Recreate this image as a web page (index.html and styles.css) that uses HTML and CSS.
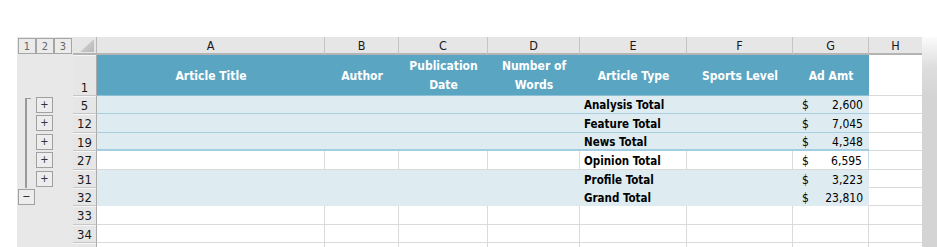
FILE: index.html
```html
<!DOCTYPE html>
<html>
<head>
<meta charset="utf-8">
<link rel="stylesheet" href="styles.css">
</head>
<body>
<div class="page">
  <div class="sheet">
    <div class="row colhdr">
      <div class="levels"><span class="lvl">1</span><span class="lvl">2</span><span class="lvl">3</span></div>
      <div class="corner"><svg class="tri" width="14" height="13" viewBox="0 0 14 13"><defs><linearGradient id="g" x1="0" y1="0" x2="1" y2="1"><stop offset="0" stop-color="#d8d8d8"/><stop offset="1" stop-color="#b8b8b8"/></linearGradient></defs><polygon points="14,0 14,13 0,13" fill="url(#g)"/></svg></div>
      <div class="ch">A</div>
      <div class="ch">B</div>
      <div class="ch">C</div>
      <div class="ch">D</div>
      <div class="ch">E</div>
      <div class="ch">F</div>
      <div class="ch">G</div>
      <div class="ch last">H</div>
    </div>

    <div class="row hdr">
      <div class="ol"></div>
      <div class="rh rh-bottom">1</div>
      <div class="th">Article Title</div>
      <div class="th">Author</div>
      <div class="th">Publication<br>Date</div>
      <div class="th">Number of<br>Words</div>
      <div class="th">Article Type</div>
      <div class="th">Sports Level</div>
      <div class="th">Ad Amt</div>
      <div class="hc"></div>
    </div>

    <div class="row r18">
      <div class="ol br-start"><span class="obtn">+</span></div>
      <div class="rh">5</div>
      <div class="b bl"></div><div class="b bl"></div><div class="b bl"></div><div class="b bl"></div>
      <div class="b bl t">Analysis Total</div><div class="b bl"></div>
      <div class="b bl amt"><span>$</span><span>2,600</span></div>
      <div class="hc"></div>
    </div>

    <div class="row r19">
      <div class="ol br"><span class="obtn">+</span></div>
      <div class="rh">12</div>
      <div class="b bl"></div><div class="b bl"></div><div class="b bl"></div><div class="b bl"></div>
      <div class="b bl t">Feature Total</div><div class="b bl"></div>
      <div class="b bl amt"><span>$</span><span>7,045</span></div>
      <div class="hc"></div>
    </div>

    <div class="row r18">
      <div class="ol br"><span class="obtn">+</span></div>
      <div class="rh">19</div>
      <div class="b bl2"></div><div class="b bl2"></div><div class="b bl2"></div><div class="b bl2"></div>
      <div class="b bl2 t">News Total</div><div class="b bl2"></div>
      <div class="b bl2 amt"><span>$</span><span>4,348</span></div>
      <div class="hc"></div>
    </div>

    <div class="row r19">
      <div class="ol br"><span class="obtn">+</span></div>
      <div class="rh">27</div>
      <div class="w"></div><div class="w"></div><div class="w"></div><div class="w"></div>
      <div class="w t">Opinion Total</div><div class="w"></div>
      <div class="w wg amt"><span>$</span><span>6,595</span></div>
      <div class="hc"></div>
    </div>

    <div class="row r18">
      <div class="ol br"><span class="obtn">+</span></div>
      <div class="rh">31</div>
      <div class="b"></div><div class="b"></div><div class="b"></div><div class="b"></div>
      <div class="b t">Profile Total</div><div class="b"></div>
      <div class="b amt"><span>$</span><span>3,223</span></div>
      <div class="hc"></div>
    </div>

    <div class="row r18">
      <div class="ol ol-min"><span class="obtn minus">&minus;</span></div>
      <div class="rh">32</div>
      <div class="b"></div><div class="b"></div><div class="b"></div><div class="b"></div>
      <div class="b t">Grand Total</div><div class="b"></div>
      <div class="b amt"><span>$</span><span>23,810</span></div>
      <div class="hc"></div>
    </div>

    <div class="row r19">
      <div class="ol"></div>
      <div class="rh">33</div>
      <div class="w"></div><div class="w"></div><div class="w"></div><div class="w"></div>
      <div class="w"></div><div class="w"></div><div class="w"></div>
      <div class="hc"></div>
    </div>

    <div class="row r18">
      <div class="ol"></div>
      <div class="rh">34</div>
      <div class="w"></div><div class="w"></div><div class="w"></div><div class="w"></div>
      <div class="w"></div><div class="w"></div><div class="w"></div>
      <div class="hc"></div>
    </div>

    <div class="row r18">
      <div class="ol"></div>
      <div class="rh"></div>
      <div class="w"></div><div class="w"></div><div class="w"></div><div class="w"></div>
      <div class="w"></div><div class="w"></div><div class="w"></div>
      <div class="hc"></div>
    </div>
  </div>
  <div class="shade"></div>
</div>
</body>
</html>
```

FILE: styles.css
```css
* {
  box-sizing: border-box;
  margin: 0;
  padding: 0;
}

html, body {
  height: 247px;
  overflow: hidden;
}

body {
  background: #fff;
  font-family: "DejaVu Sans Condensed", "DejaVu Sans", sans-serif;
  font-stretch: semi-condensed;
  font-size: 12px;
  color: #111;
}

.page {
  display: flex;
  padding: 37px 0 0 17px;
  height: 247px;
}

.sheet {
  width: 905px;
  flex: none;
}

.shade {
  flex: 1;
  background: linear-gradient(to bottom, #fbfbfb 0, #dedede 30px, #d4d4d4 60px);
}

.row {
  display: grid;
  grid-template-columns: 56px 24px 228px 74px 89px 92px 107px 106px 76px 53px;
}

.r18 { height: 18px; }
.r19 { height: 19px; }

/* column header band */
.colhdr {
  height: 18px;
}

.levels {
  background: #e8e8e8;
  display: flex;
  padding: 1px 0 0 1px;
}

.lvl {
  width: 18px;
  height: 16px;
  border: 1px solid #a5a5a5;
  background: #ebebeb;
  color: #666;
  font-size: 11px;
  display: flex;
  align-items: center;
  justify-content: center;
}

.corner {
  background: #e6e6e6;
  border-bottom: 2px solid #b4b4b4;
  border-right: 1px solid #b9b9b9;
  display: flex;
  justify-content: flex-end;
  align-items: flex-end;
  padding: 0 2px 1px 0;
}

.tri { display: block; }

.ch {
  background: #e6e6e6;
  border-right: 1px solid #c4c4c4;
  border-bottom: 2px solid #b4b4b4;
  text-align: center;
  padding-top: 1px;
  line-height: 15px;
  font-size: 12.5px;
  color: #1a1a1a;
}

.ch.last { border-right: none; }

/* header row */
.hdr { height: 41px; }

.ol {
  background: #e8e8e8;
  position: relative;
  display: flex;
  align-items: flex-start;
  padding: 1px 0 0 19px;
}

.rh {
  background: #e6e6e6;
  border-right: 1px solid #ababab;
  border-bottom: 1px solid #c6c6c6;
  box-shadow: inset 0 1px 0 #f6f6f6;
  display: flex;
  align-items: center;
  justify-content: center;
  padding-top: 1px;
  font-size: 13px;
  color: #1a1a1a;
}

.rh-bottom {
  align-items: flex-end;
  padding-bottom: 0;
}

.th {
  background: #5aa5c2;
  color: #fff;
  font-weight: bold;
  font-size: 12px;
  line-height: 19px;
  text-align: center;
  display: flex;
  align-items: center;
  justify-content: center;
  padding-top: 2px;
  border-bottom: 1px solid #8ec0d3;
}

.hc {
  background: #fff;
  border-bottom: 1px solid #dadada;
}

/* body cells */
.b { background: #deecf2; }
.bl { border-bottom: 1px solid #a7cfdf; }
.bl2 { border-bottom: 2px solid #a3cde0; }

.w {
  background: #fff;
  border-right: 1px solid #dadada;
  border-bottom: 1px solid #dadada;
}

.wg { border-right-color: #c3deea; }

.t {
  font-weight: bold;
  font-size: 11.5px;
  padding: 1px 0 0 4px;
  display: flex;
  align-items: center;
  color: #000;
}

.amt {
  display: flex;
  align-items: center;
  justify-content: space-between;
  padding: 1px 6px 0 9px;
  font-size: 12px;
  color: #000;
}

/* outline controls */
.obtn {
  width: 17px;
  height: 16px;
  border: 1px solid #a0a0a0;
  background: #ededed;
  color: #333;
  font-family: "DejaVu Sans", sans-serif;
  font-size: 11px;
  line-height: 14px;
  text-align: center;
}

.ol-min { padding-left: 1px; }

.br::before,
.br-start::before {
  content: "";
  position: absolute;
  left: 8px;
  top: 0;
  bottom: 0;
  border-left: 2px solid #9a9a9a;
}

.br-start::before {
  top: 2px;
  width: 4px;
  border-top: 1px solid #9a9a9a;
}
```
